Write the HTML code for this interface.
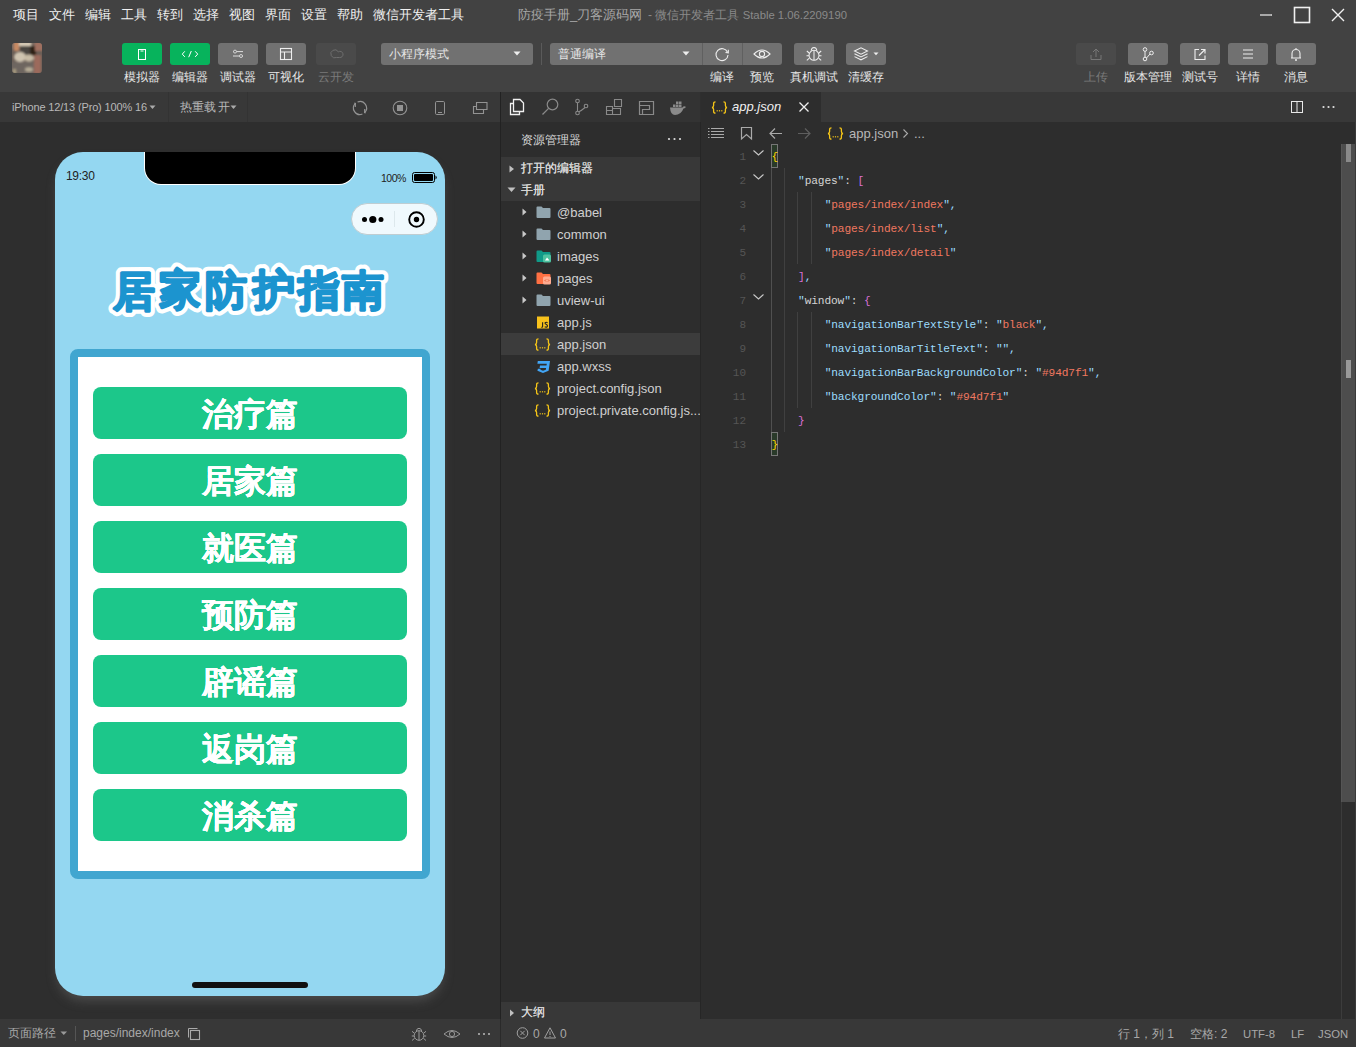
<!DOCTYPE html>
<html><head><meta charset="utf-8">
<style>
*{margin:0;padding:0;box-sizing:border-box}
html,body{width:1356px;height:1047px;overflow:hidden;background:#2e2e2e;font-family:"Liberation Sans",sans-serif;color:#ddd}
.a{position:absolute}
#top{left:0;top:0;width:1356px;height:92px;background:#424242}
.menu{top:7px;font-size:13px;color:#f0f0f0;line-height:16px;white-space:nowrap}
.tb{top:43px;width:40px;height:22px;border-radius:3px;background:#717171}
.tbl{top:70px;font-size:12px;color:#e6e6e6;line-height:14px;text-align:center;white-space:nowrap}
#simhdr{left:0;top:92px;width:500px;height:30px;background:#383838}
#sim{left:0;top:122px;width:500px;height:897px;background:#2e2e2e}
#vsep{left:500px;top:92px;width:1px;height:927px;background:#222}
#exp{left:501px;top:92px;width:199px;height:927px;background:#2d2d2d}
#edit{left:701px;top:92px;width:655px;height:927px;background:#2d2d2d}
#status{left:0;top:1019px;width:1356px;height:28px;background:#383838}
.btn{left:38px;width:314px;height:52px;border-radius:8px;background:#1cc78a;color:#fff;font-size:32px;line-height:54px;font-weight:bold;text-align:center;text-shadow:0.45px 0 0 #fff,-0.45px 0 0 #fff,0 0.4px 0 #fff}
.fn{left:56px;font-size:13px;line-height:15px;color:#d0d0d0;white-space:nowrap}
.ji{left:33px;font-size:11px;line-height:13px;color:#f5c518;font-family:"Liberation Mono",monospace;letter-spacing:-1.5px}
.ln{left:0;width:45px;text-align:right;font-family:"Liberation Mono",monospace;font-size:11px;line-height:24px;color:#555;margin-top:1px}
.code{margin-top:1px;font-family:"Liberation Mono",monospace;font-size:11.2px;line-height:24px;white-space:pre;color:#d4d4d4;letter-spacing:-0.13px}
.st{top:8px;font-size:12px;line-height:14px;color:#a8a8a8;white-space:nowrap}
</style></head><body>
<!-- TOP BAR -->
<div id="top" class="a">
<div class="a menu" style="left:13px">项目</div>
<div class="a menu" style="left:49px">文件</div>
<div class="a menu" style="left:85px">编辑</div>
<div class="a menu" style="left:121px">工具</div>
<div class="a menu" style="left:157px">转到</div>
<div class="a menu" style="left:193px">选择</div>
<div class="a menu" style="left:229px">视图</div>
<div class="a menu" style="left:265px">界面</div>
<div class="a menu" style="left:301px">设置</div>
<div class="a menu" style="left:337px">帮助</div>
<div class="a menu" style="left:373px">微信开发者工具</div>
<div class="a menu" style="left:518px;color:#a8a8a8">防疫手册_刀客源码网</div><div class="a" style="left:648px;top:8px;font-size:12px;line-height:14px;color:#8a8a8a;white-space:nowrap">- 微信开发者工具 <span style="font-size:11.3px">Stable 1.06.2209190</span></div>
<!-- window controls -->
<svg class="a" style="left:1250px;top:0;width:106px;height:30px" viewBox="0 0 106 30">
<line x1="10" y1="15" x2="22" y2="15" stroke="#e0e0e0" stroke-width="1.3"/>
<rect x="44.5" y="7.5" width="15" height="15" fill="none" stroke="#f0f0f0" stroke-width="1.6"/>
<path d="M82 9 L94 21 M94 9 L82 21" stroke="#f0f0f0" stroke-width="1.4"/>
</svg>
<!-- avatar -->
<svg class="a" style="left:12px;top:43px" width="30" height="30" viewBox="0 0 30 30">
<defs><filter id="bl" x="-20%" y="-20%" width="140%" height="140%"><feGaussianBlur stdDeviation="1.1"/></filter><clipPath id="avc"><rect x="0" y="0" width="30" height="30" rx="3"/></clipPath></defs>
<g clip-path="url(#avc)">
<rect x="0" y="0" width="30" height="30" fill="#6a5e56"/>
<g filter="url(#bl)">
<rect x="-2" y="-2" width="34" height="8" fill="#7a6a60"/>
<rect x="2" y="-1" width="5" height="9" fill="#c88a64"/>
<rect x="7" y="-1" width="12" height="4" fill="#d8ccb8"/>
<rect x="8" y="3" width="11" height="9" fill="#4a4440"/>
<rect x="18" y="3" width="6" height="10" fill="#2e2018"/>
<rect x="23" y="-1" width="8" height="9" fill="#a07060"/>
<ellipse cx="8" cy="14" rx="6" ry="5" fill="#cfc4b0"/>
<ellipse cx="17" cy="15" rx="5" ry="3.5" fill="#c8bca6"/>
<rect x="-1" y="19" width="24" height="12" fill="#6e6660"/>
<rect x="22" y="12" width="7" height="19" fill="#9c6a5c"/>
<ellipse cx="17" cy="26.5" rx="4" ry="2.2" fill="#b8ae98"/>
<rect x="1" y="26" width="3" height="5" fill="#a89c80"/>
</g></g></svg>
<!-- left buttons -->
<div class="a tb" style="left:122px;background:#07b35c"><svg width="40" height="22"><rect x="16.5" y="6.5" width="7" height="10" fill="none" stroke="#fff" stroke-width="1"/><line x1="18.5" y1="8" x2="21.5" y2="8" stroke="#fff" stroke-width="1"/></svg></div>
<div class="a tb" style="left:170px;background:#07b35c"><svg width="40" height="22"><path d="M14.8 8.3 L12.3 11.1 L14.8 13.9 M25.2 8.3 L27.7 11.1 L25.2 13.9 M21.3 8 L18.7 14.2" fill="none" stroke="#fff" stroke-width="1"/></svg></div>
<div class="a tb" style="left:218px"><svg width="40" height="22"><path d="M15 8.6 H25 M15 13 H25" stroke="#ddd" stroke-width="1"/><circle cx="17" cy="8.6" r="1.5" fill="#717171" stroke="#ddd" stroke-width="0.9"/><circle cx="23" cy="13" r="1.5" fill="#717171" stroke="#ddd" stroke-width="0.9"/></svg></div>
<div class="a tb" style="left:266px"><svg width="40" height="22"><rect x="14.5" y="5.5" width="11" height="11" fill="none" stroke="#eee" stroke-width="1.1"/><path d="M14.5 9 H25.5 M18.5 9 V16.5" stroke="#eee" stroke-width="1.1"/></svg></div>
<div class="a tb" style="left:316px;background:#4a4a4a"><svg width="40" height="22"><path d="M20.5 14.5 A4 4 0 1 1 22.3 8.8 A3.1 3.1 0 1 1 23.5 14.5Z" fill="none" stroke="#6e6e6e" stroke-width="1"/></svg></div>
<div class="a tbl" style="left:122px;width:40px">模拟器</div>
<div class="a tbl" style="left:170px;width:40px">编辑器</div>
<div class="a tbl" style="left:218px;width:40px">调试器</div>
<div class="a tbl" style="left:266px;width:40px">可视化</div>
<div class="a tbl" style="left:316px;width:40px;color:#7a7a7a">云开发</div>
<!-- dropdowns -->
<div class="a" style="left:381px;top:43px;width:152px;height:22px;border-radius:3px;background:#717171"></div>
<div class="a" style="left:389px;top:47px;font-size:12px;line-height:14px;color:#e6e6e6">小程序模式</div>
<svg class="a" style="left:513px;top:51px" width="8" height="5"><path d="M0.5 0.5 L7.5 0.5 L4 4.5Z" fill="#eee"/></svg>
<div class="a" style="left:541px;top:43px;width:1px;height:22px;background:#5a5a5a"></div>
<div class="a" style="left:550px;top:43px;width:232px;height:22px;border-radius:3px;background:#717171"></div>
<div class="a" style="left:702px;top:43px;width:1px;height:22px;background:#606060"></div>
<div class="a" style="left:742px;top:43px;width:1px;height:22px;background:#606060"></div>
<div class="a" style="left:558px;top:47px;font-size:12px;line-height:14px;color:#e6e6e6">普通编译</div>
<svg class="a" style="left:682px;top:51px" width="8" height="5"><path d="M0.5 0.5 L7.5 0.5 L4 4.5Z" fill="#eee"/></svg>
<svg class="a" style="left:702px;top:43px" width="40" height="22"><path d="M25.5 9.2 A6 6 0 1 0 26 12" fill="none" stroke="#eee" stroke-width="1.1"/><path d="M23.5 9.5 L26.3 9.8 L26.3 6.8" fill="none" stroke="#eee" stroke-width="1.1"/></svg>
<svg class="a" style="left:742px;top:43px" width="40" height="22"><path d="M12 11 Q20 3 28 11 Q20 19 12 11Z" fill="none" stroke="#eee" stroke-width="1.1"/><circle cx="20" cy="11" r="2.6" fill="none" stroke="#eee" stroke-width="1.1"/></svg>
<div class="a tb" style="left:794px"><svg width="40" height="22"><circle cx="20" cy="12.3" r="5" fill="none" stroke="#eee" stroke-width="1.05"/><path d="M17.2 7.8 Q17.4 4.8 20 4.6 Q22.6 4.8 22.8 7.8 M20 7.3 V17.3 M15.2 10 L12.8 8 M15 12.8 H12.5 M15.4 15.2 L12.8 17.4 M24.8 10 L27.2 8 M25 12.8 H27.5 M24.6 15.2 L27.2 17.4" fill="none" stroke="#eee" stroke-width="1.05"/></svg></div>
<div class="a tb" style="left:846px"><svg width="40" height="22"><path d="M8.5 8 L15 4.8 L21.5 8 L15 11.2Z M8.5 10.8 L15 14 L21.5 10.8 M8.5 13.6 L15 16.8 L21.5 13.6" fill="none" stroke="#eee" stroke-width="1.05"/><path d="M27.5 9.5 L32.5 9.5 L30 12.3Z" fill="#eee"/></svg></div>
<div class="a tbl" style="left:702px;width:40px">编译</div>
<div class="a tbl" style="left:742px;width:40px">预览</div>
<div class="a tbl" style="left:790px;width:48px">真机调试</div>
<div class="a tbl" style="left:842px;width:48px">清缓存</div>
<!-- right buttons -->
<div class="a tb" style="left:1076px;background:#4a4a4a"><svg width="40" height="22"><path d="M15 12 V16.5 H25 V12 M20 14 V6 M17 9 L20 6 L23 9" fill="none" stroke="#777" stroke-width="1"/></svg></div>
<div class="a tb" style="left:1128px"><svg width="40" height="22"><circle cx="17" cy="6.5" r="1.8" fill="none" stroke="#eee"/><circle cx="17" cy="16" r="1.8" fill="none" stroke="#eee"/><circle cx="23.5" cy="10" r="1.8" fill="none" stroke="#eee"/><path d="M17 8.3 V14.2 M22 11 L18.5 15" fill="none" stroke="#eee"/></svg></div>
<div class="a tb" style="left:1180px"><svg width="40" height="22"><path d="M19 6.5 H15 V16.5 H25 V12.5 M21 6.5 H25 V10.5 M25 6.5 L19 12.5" fill="none" stroke="#eee" stroke-width="1.1"/></svg></div>
<div class="a tb" style="left:1228px"><svg width="40" height="22"><path d="M15 7 H25 M15 11 H25 M15 15 H25" stroke="#eee" stroke-width="1.1"/></svg></div>
<div class="a tb" style="left:1276px"><svg width="40" height="22"><path d="M16 15 V10.5 A4 4 0 0 1 24 10.5 V15 H16 M15 15 H25 M20 5 V6.5" fill="none" stroke="#eee" stroke-width="1.1"/><circle cx="20" cy="17" r="1" fill="#eee"/></svg></div>
<div class="a tbl" style="left:1076px;width:40px;color:#7a7a7a">上传</div>
<div class="a tbl" style="left:1120px;width:56px">版本管理</div>
<div class="a tbl" style="left:1176px;width:48px">测试号</div>
<div class="a tbl" style="left:1228px;width:40px">详情</div>
<div class="a tbl" style="left:1276px;width:40px">消息</div>
</div>

<!-- SIM HEADER -->
<div id="simhdr" class="a">
<div class="a" style="left:12px;top:8px;font-size:11px;line-height:14px;color:#b8b8b8;white-space:nowrap;letter-spacing:-0.15px">iPhone 12/13 (Pro) 100% 16</div>
<svg class="a" style="left:149px;top:13px" width="7" height="5"><path d="M0.5 0.5 L6.5 0.5 L3.5 4Z" fill="#aaa"/></svg>
<div class="a" style="left:168px;top:0;width:1px;height:30px;background:#333"></div>
<div class="a" style="left:180px;top:8px;font-size:11.5px;line-height:14px;color:#b8b8b8;white-space:nowrap;letter-spacing:-0.2px">热重载 开</div>
<svg class="a" style="left:230px;top:13px" width="7" height="5"><path d="M0.5 0.5 L6.5 0.5 L3.5 4Z" fill="#aaa"/></svg>
<div class="a" style="left:247px;top:0;width:1px;height:30px;background:#333"></div>
<svg class="a" style="left:340px;top:0" width="160" height="30">
<path d="M17.57 9.97 A6.5 6.5 0 0 1 24.60 20.60 M22.43 22.03 A6.5 6.5 0 0 1 15.40 11.40" fill="none" stroke="#939393" stroke-width="1.2"/>
<path d="M24.74 17.06 L24.60 20.60 L25.66 20.81 M15.26 14.94 L15.40 11.40 L14.34 11.19" fill="none" stroke="#939393" stroke-width="1.2"/>
<circle cx="60" cy="16" r="6.8" fill="none" stroke="#939393" stroke-width="1.1"/>
<rect x="57" y="13" width="6" height="6" fill="#939393"/>
<rect x="95.5" y="9.5" width="9" height="13" rx="1.2" fill="none" stroke="#939393" stroke-width="1"/>
<line x1="98" y1="20.5" x2="102" y2="20.5" stroke="#939393" stroke-width="1"/>
<path d="M136.5 10.5 H147 V17.5 H136.5Z M136.5 14.5 H133.5 V21.5 H143.5 V17.5" fill="none" stroke="#939393" stroke-width="1.1"/>
</svg>
</div>
<!-- SIM -->
<div id="sim" class="a">
<div id="phone" class="a" style="left:55px;top:30px;width:390px;height:844px;border-radius:28px;background:#94d7f1;overflow:hidden;box-shadow:0 7px 12px -3px rgba(130,130,130,.4)">
  <!-- notch -->
  <div class="a" style="left:89px;top:-1px;width:212px;height:34px;border-radius:0 0 17px 17px;background:#fff"></div>
  <div class="a" style="left:90px;top:-1px;width:210px;height:33px;border-radius:0 0 16px 16px;background:#000"></div>
  <div class="a" style="left:11px;top:17px;font-size:12px;line-height:14px;color:#222;letter-spacing:-0.3px">19:30</div>
  <div class="a" style="left:326px;top:20px;font-size:10.5px;line-height:12px;color:#222;letter-spacing:-0.5px">100%</div>
  <svg class="a" style="left:357px;top:20px" width="28" height="12"><rect x="0.5" y="0.5" width="22" height="10" rx="2" fill="none" stroke="#000" stroke-width="1"/><rect x="2" y="2" width="19" height="7" rx="1" fill="#000"/><path d="M23.5 3.5 Q26 5.5 23.5 7.5Z" fill="#000"/></svg>
  <!-- capsule -->
  <div class="a" style="left:296px;top:51px;width:87px;height:32px;border-radius:16px;background:#f0f9fd;border:1px solid #bfcdd2"></div>
  <div class="a" style="left:339px;top:59px;width:1px;height:16px;background:#dde8ec"></div>
  <svg class="a" style="left:296px;top:51px" width="87" height="32">
    <circle cx="13.5" cy="16.5" r="2.5" fill="#000"/><circle cx="21.8" cy="16.5" r="3.6" fill="#000"/><circle cx="30" cy="16.5" r="2.5" fill="#000"/>
    <circle cx="65.5" cy="16.5" r="7.3" fill="none" stroke="#000" stroke-width="1.9"/><circle cx="65.5" cy="16.5" r="2.7" fill="#000"/>
  </svg>
  <!-- logo -->
  <svg class="a" style="left:0;top:100px" width="390" height="110" viewBox="0 0 390 110"><text x="78.7" y="54" text-anchor="middle" font-family="Liberation Sans" font-size="42" font-weight="bold" fill="#fff" stroke="#fff" stroke-width="10.5" stroke-linejoin="round">居</text><text x="125.2" y="52" text-anchor="middle" font-family="Liberation Sans" font-size="42" font-weight="bold" fill="#fff" stroke="#fff" stroke-width="10.5" stroke-linejoin="round">家</text><text x="170.5" y="53" text-anchor="middle" font-family="Liberation Sans" font-size="42" font-weight="bold" fill="#fff" stroke="#fff" stroke-width="10.5" stroke-linejoin="round">防</text><text x="218.6" y="52" text-anchor="middle" font-family="Liberation Sans" font-size="42" font-weight="bold" fill="#fff" stroke="#fff" stroke-width="10.5" stroke-linejoin="round">护</text><text x="264.0" y="53" text-anchor="middle" font-family="Liberation Sans" font-size="42" font-weight="bold" fill="#fff" stroke="#fff" stroke-width="10.5" stroke-linejoin="round">指</text><text x="308.0" y="53" text-anchor="middle" font-family="Liberation Sans" font-size="42" font-weight="bold" fill="#fff" stroke="#fff" stroke-width="10.5" stroke-linejoin="round">南</text><text x="78.7" y="54" text-anchor="middle" font-family="Liberation Sans" font-size="42" font-weight="bold" fill="#1c94cf" stroke="#1c94cf" stroke-width="2.2" stroke-linejoin="round">居</text><text x="125.2" y="52" text-anchor="middle" font-family="Liberation Sans" font-size="42" font-weight="bold" fill="#1c94cf" stroke="#1c94cf" stroke-width="2.2" stroke-linejoin="round">家</text><text x="170.5" y="53" text-anchor="middle" font-family="Liberation Sans" font-size="42" font-weight="bold" fill="#1c94cf" stroke="#1c94cf" stroke-width="2.2" stroke-linejoin="round">防</text><text x="218.6" y="52" text-anchor="middle" font-family="Liberation Sans" font-size="42" font-weight="bold" fill="#1c94cf" stroke="#1c94cf" stroke-width="2.2" stroke-linejoin="round">护</text><text x="264.0" y="53" text-anchor="middle" font-family="Liberation Sans" font-size="42" font-weight="bold" fill="#1c94cf" stroke="#1c94cf" stroke-width="2.2" stroke-linejoin="round">指</text><text x="308.0" y="53" text-anchor="middle" font-family="Liberation Sans" font-size="42" font-weight="bold" fill="#1c94cf" stroke="#1c94cf" stroke-width="2.2" stroke-linejoin="round">南</text></svg>
  <!-- card -->
  <div class="a" style="left:15px;top:197px;width:360px;height:530px;border:8px solid #41a6d0;border-radius:8px;background:#fff"></div>
  <div class="a btn" style="top:235px">治疗篇</div>
  <div class="a btn" style="top:302px">居家篇</div>
  <div class="a btn" style="top:369px">就医篇</div>
  <div class="a btn" style="top:436px">预防篇</div>
  <div class="a btn" style="top:503px">辟谣篇</div>
  <div class="a btn" style="top:570px">返岗篇</div>
  <div class="a btn" style="top:637px">消杀篇</div>
  <!-- home indicator -->
  <div class="a" style="left:137px;top:830px;width:116px;height:6px;border-radius:3px;background:#111"></div>
</div>
</div>

<div id="vsep" class="a"></div>
<!-- EXPLORER -->
<div id="exp" class="a">
<div class="a" style="left:0;top:0;width:199px;height:30px;background:#333"></div>
<svg class="a" style="left:0;top:0" width="199" height="30">
<!-- files -->
<path d="M12.5 11.5 H9.5 V22.5 H18.5 V19.5" fill="none" stroke="#f0f0f0" stroke-width="1.3"/>
<path d="M12.5 7.5 H19 L22.5 11 V19.5 H12.5Z" fill="none" stroke="#f0f0f0" stroke-width="1.3"/>
<!-- search -->
<circle cx="51.5" cy="12.5" r="5.3" fill="none" stroke="#8a8a8a" stroke-width="1.2"/>
<line x1="47.6" y1="16.4" x2="41.5" y2="22.5" stroke="#8a8a8a" stroke-width="1.3"/>
<!-- git -->
<circle cx="76.5" cy="9" r="1.8" fill="none" stroke="#8a8a8a" stroke-width="1.1"/>
<circle cx="76.5" cy="21" r="1.8" fill="none" stroke="#8a8a8a" stroke-width="1.1"/>
<circle cx="85" cy="14" r="1.8" fill="none" stroke="#8a8a8a" stroke-width="1.1"/>
<path d="M76.5 10.8 V19.2 M84 15.5 Q80 19 77.8 19.8" fill="none" stroke="#8a8a8a" stroke-width="1.1"/>
<!-- ext -->
<path d="M105.5 14.5 H111.5 V22.5 H105.5Z M111.5 16.5 H119.5 V22.5 H111.5 M105.5 18.5 H111.5 M113.5 7.5 H120.5 V14.5 H113.5Z" fill="none" stroke="#8a8a8a" stroke-width="1.1"/>
<!-- layout -->
<path d="M138.5 9.5 H152.5 V22.5 H138.5Z M138.5 13.5 H148.5 V17.5 H141.5 V22.5" fill="none" stroke="#8a8a8a" stroke-width="1.2"/>
<!-- docker -->
<path d="M169 15.5 H181.5 Q183 13.5 185 15 Q183.5 16.5 182.5 16.5 Q180 23 174 23 Q169.5 23 169 15.5Z" fill="#8a8a8a"/>
<rect x="172" y="12.5" width="2.5" height="2.5" fill="#8a8a8a"/><rect x="175" y="12.5" width="2.5" height="2.5" fill="#8a8a8a"/><rect x="178" y="12.5" width="2.5" height="2.5" fill="#8a8a8a"/><rect x="175" y="9.5" width="2.5" height="2.5" fill="#8a8a8a"/><rect x="178" y="9.5" width="2.5" height="2.5" fill="#8a8a8a"/>
</svg>
<div class="a" style="left:20px;top:41px;font-size:12px;line-height:14px;color:#d8d8d8">资源管理器</div>
<svg class="a" style="left:166px;top:45px" width="16" height="4"><circle cx="2" cy="2" r="1.1" fill="#ddd"/><circle cx="7.5" cy="2" r="1.1" fill="#ddd"/><circle cx="13" cy="2" r="1.1" fill="#ddd"/></svg>
<div class="a" style="left:0;top:65px;width:199px;height:44px;background:#383838"></div>
<svg class="a" style="left:7px;top:72px" width="10" height="10"><path d="M1.5 1.5 L6 5 L1.5 8.5Z" fill="#c0c0c0"/></svg>
<div class="a" style="left:20px;top:69px;font-size:11.5px;line-height:14px;color:#d8d8d8;text-shadow:0.35px 0 0 #d8d8d8">打开的编辑器</div>
<svg class="a" style="left:6px;top:94px" width="10" height="8"><path d="M0.5 1.5 H8.5 L4.5 6Z" fill="#c0c0c0"/></svg>
<div class="a" style="left:20px;top:91px;font-size:11.5px;line-height:14px;color:#d8d8d8;text-shadow:0.35px 0 0 #d8d8d8">手册</div>
<!-- selected row -->
<div class="a" style="left:0;top:241px;width:199px;height:22px;background:#3c3c3c"></div>
<!-- arrows -->
<svg class="a" style="left:20px;top:109px" width="10" height="110">
<path d="M1.5 7.5 L5.5 11 L1.5 14.5Z M1.5 29.5 L5.5 33 L1.5 36.5Z M1.5 51.5 L5.5 55 L1.5 58.5Z M1.5 73.5 L5.5 77 L1.5 80.5Z M1.5 95.5 L5.5 99 L1.5 102.5Z" fill="#c8c8c8"/>
</svg>
<!-- icons -->
<svg class="a" style="left:34px;top:110px" width="20" height="220">
<path d="M1.5 5.5 Q1.5 4.5 2.5 4.5 H6.5 L8 6 H14.5 Q15.5 6 15.5 7 V15 Q15.5 16 14.5 16 H2.5 Q1.5 16 1.5 15Z" fill="#90a4ae"/>
<path d="M1.5 27.5 Q1.5 26.5 2.5 26.5 H6.5 L8 28 H14.5 Q15.5 28 15.5 29 V37 Q15.5 38 14.5 38 H2.5 Q1.5 38 1.5 37Z" fill="#90a4ae"/>
<path d="M1.5 49.5 Q1.5 48.5 2.5 48.5 H6.5 L8 50 H14.5 Q15.5 50 15.5 51 V59 Q15.5 60 14.5 60 H2.5 Q1.5 60 1.5 59Z" fill="#109a88"/>
<rect x="8" y="52.5" width="8" height="8" rx="1.5" fill="#4fc3a1"/><path d="M10 58.5 L12 55.5 L14.5 58.5Z" fill="#fff"/>
<path d="M1.5 71.5 Q1.5 70.5 2.5 70.5 H6.5 L8 72 H14.5 Q15.5 72 15.5 73 V81 Q15.5 82 14.5 82 H2.5 Q1.5 82 1.5 81Z" fill="#ff7043"/>
<rect x="8" y="74.5" width="8" height="8" rx="1.5" fill="#ffab91"/><path d="M10 78.5 L11 77.5 M10 78.5 L11 79.5 M14 78.5 L13 77.5 M14 78.5 L13 79.5" stroke="#d84315" stroke-width=".8"/>
<path d="M1.5 93.5 Q1.5 92.5 2.5 92.5 H6.5 L8 94 H14.5 Q15.5 94 15.5 95 V103 Q15.5 104 14.5 104 H2.5 Q1.5 104 1.5 103Z" fill="#90a4ae"/>
<!-- app.js -->
<rect x="2" y="114.5" width="12" height="12" fill="#f8c21c"/><path d="M7.6 120.3 V124.4 Q7.6 125.4 6.3 125.3 M12.6 120.7 Q11.2 119.9 10.1 120.7 Q9.7 122 11.4 122.6 Q12.9 123.3 12.2 124.7 Q11.2 125.5 9.7 124.8" fill="none" stroke="#222" stroke-width="1.1"/>
<!-- json icons -->

<path d="M1 132 Q1 137" fill="none"/>
<!-- wxss -->
<path d="M2.5 250.5 H14 L12.5 261 L7.5 263 L3 261" fill="none"/>
</svg>
<svg class="a" style="left:33px;top:246px" width="17" height="13"><path d="M4.5 0.8 Q2.6 0.8 2.6 2.6 V4.6 Q2.6 6.3 1 6.5 Q2.6 6.7 2.6 8.4 V10.4 Q2.6 12.2 4.5 12.2 M12.5 0.8 Q14.4 0.8 14.4 2.6 V4.6 Q14.4 6.3 16 6.5 Q14.4 6.7 14.4 8.4 V10.4 Q14.4 12.2 12.5 12.2" fill="none" stroke="#f5c518" stroke-width="1.3"/><rect x="5.6" y="9.2" width="1.2" height="1.2" fill="#f5c518"/><rect x="7.9" y="9.2" width="1.2" height="1.2" fill="#f5c518"/><rect x="10.2" y="9.2" width="1.2" height="1.2" fill="#f5c518"/></svg>
<svg class="a" style="left:33px;top:290px" width="17" height="13"><path d="M4.5 0.8 Q2.6 0.8 2.6 2.6 V4.6 Q2.6 6.3 1 6.5 Q2.6 6.7 2.6 8.4 V10.4 Q2.6 12.2 4.5 12.2 M12.5 0.8 Q14.4 0.8 14.4 2.6 V4.6 Q14.4 6.3 16 6.5 Q14.4 6.7 14.4 8.4 V10.4 Q14.4 12.2 12.5 12.2" fill="none" stroke="#f5c518" stroke-width="1.3"/><rect x="5.6" y="9.2" width="1.2" height="1.2" fill="#f5c518"/><rect x="7.9" y="9.2" width="1.2" height="1.2" fill="#f5c518"/><rect x="10.2" y="9.2" width="1.2" height="1.2" fill="#f5c518"/></svg>
<svg class="a" style="left:33px;top:312px" width="17" height="13"><path d="M4.5 0.8 Q2.6 0.8 2.6 2.6 V4.6 Q2.6 6.3 1 6.5 Q2.6 6.7 2.6 8.4 V10.4 Q2.6 12.2 4.5 12.2 M12.5 0.8 Q14.4 0.8 14.4 2.6 V4.6 Q14.4 6.3 16 6.5 Q14.4 6.7 14.4 8.4 V10.4 Q14.4 12.2 12.5 12.2" fill="none" stroke="#f5c518" stroke-width="1.3"/><rect x="5.6" y="9.2" width="1.2" height="1.2" fill="#f5c518"/><rect x="7.9" y="9.2" width="1.2" height="1.2" fill="#f5c518"/><rect x="10.2" y="9.2" width="1.2" height="1.2" fill="#f5c518"/></svg>
<svg class="a" style="left:34px;top:267px" width="16" height="16"><path d="M2.8 2 H15 L13.6 11.8 L8 14 L2.4 11.8 L2.9 9.8 H5.6 L5.4 10.8 L8 11.7 L10.8 10.8 L11.1 9.1 H4.6 L5 6.6 H11.5 L11.8 4.7 H2.4Z" fill="#42a5f5"/></svg>
<div class="a fn" style="top:113px">@babel</div>
<div class="a fn" style="top:135px">common</div>
<div class="a fn" style="top:157px">images</div>
<div class="a fn" style="top:179px">pages</div>
<div class="a fn" style="top:201px">uview-ui</div>
<div class="a fn" style="top:223px">app.js</div>
<div class="a fn" style="top:245px">app.json</div>
<div class="a fn" style="top:267px">app.wxss</div>
<div class="a fn" style="top:289px">project.config.json</div>
<div class="a fn" style="top:311px">project.private.config.js...</div>
<div class="a" style="left:199px;top:30px;width:1px;height:897px;background:#262626"></div>
<!-- outline section -->
<div class="a" style="left:0;top:910px;width:199px;height:17px;background:#383838"></div>
<svg class="a" style="left:8px;top:917px" width="8" height="8"><path d="M1 0.5 L5 4 L1 7.5Z" fill="#c0c0c0"/></svg>
<div class="a" style="left:20px;top:914px;font-size:11.5px;line-height:13px;color:#d8d8d8;text-shadow:0.35px 0 0 #d8d8d8">大纲</div>
</div>

<!-- EDITOR -->
<div id="edit" class="a">
<div class="a" style="left:0;top:0;width:655px;height:30px;background:#383838"></div>
<div class="a" style="left:0;top:0;width:120px;height:30px;background:#2d2d2d"></div>
<svg class="a" style="left:10px;top:9px" width="17" height="13"><path d="M4.5 0.8 Q2.6 0.8 2.6 2.6 V4.6 Q2.6 6.3 1 6.5 Q2.6 6.7 2.6 8.4 V10.4 Q2.6 12.2 4.5 12.2 M12.5 0.8 Q14.4 0.8 14.4 2.6 V4.6 Q14.4 6.3 16 6.5 Q14.4 6.7 14.4 8.4 V10.4 Q14.4 12.2 12.5 12.2" fill="none" stroke="#f5c518" stroke-width="1.3"/><rect x="5.6" y="9.2" width="1.2" height="1.2" fill="#f5c518"/><rect x="7.9" y="9.2" width="1.2" height="1.2" fill="#f5c518"/><rect x="10.2" y="9.2" width="1.2" height="1.2" fill="#f5c518"/></svg>
<div class="a" style="left:31px;top:7px;font-size:13px;line-height:16px;font-style:italic;color:#f0f0f0">app.json</div>
<svg class="a" style="left:97px;top:9px" width="12" height="12"><path d="M1.5 1.5 L10.5 10.5 M10.5 1.5 L1.5 10.5" stroke="#f0f0f0" stroke-width="1.3"/></svg>
<svg class="a" style="left:588px;top:7px" width="16" height="16"><rect x="2.5" y="2.5" width="11" height="11" fill="none" stroke="#e8e8e8" stroke-width="1"/><line x1="8" y1="2.5" x2="8" y2="13.5" stroke="#e8e8e8" stroke-width="1"/></svg>
<svg class="a" style="left:620px;top:13px" width="16" height="4"><circle cx="2.5" cy="2" r="1.1" fill="#e0e0e0"/><circle cx="7.5" cy="2" r="1.1" fill="#e0e0e0"/><circle cx="12.5" cy="2" r="1.1" fill="#e0e0e0"/></svg>
<svg class="a" style="left:0;top:30px" width="240" height="24"><path d="M10 6.5 H23 M10 9.5 H23 M10 12.5 H23 M10 15.5 H23" stroke="#aaa" stroke-width="1"/><path d="M7 6.5 H8.5 M7 9.5 H8.5 M7 12.5 H8.5 M7 15.5 H8.5" stroke="#aaa" stroke-width="1"/><path d="M40.5 5.5 H50.5 V17 L45.5 12.5 L40.5 17Z" fill="none" stroke="#aaa" stroke-width="1.2"/><path d="M81 11.5 H69 M74 6.5 L69 11.5 L74 16.5" fill="none" stroke="#aaa" stroke-width="1.2"/><path d="M97 11.5 H109 M104 6.5 L109 11.5 L104 16.5" fill="none" stroke="#5e5e5e" stroke-width="1.2"/><path d="M202.5 7.5 L206.5 11.5 L202.5 15.5" fill="none" stroke="#aaa" stroke-width="1.1"/></svg>
<svg class="a" style="left:126px;top:35px" width="17" height="13"><path d="M4.5 0.8 Q2.6 0.8 2.6 2.6 V4.6 Q2.6 6.3 1 6.5 Q2.6 6.7 2.6 8.4 V10.4 Q2.6 12.2 4.5 12.2 M12.5 0.8 Q14.4 0.8 14.4 2.6 V4.6 Q14.4 6.3 16 6.5 Q14.4 6.7 14.4 8.4 V10.4 Q14.4 12.2 12.5 12.2" fill="none" stroke="#f5c518" stroke-width="1.3"/><rect x="5.6" y="9.2" width="1.2" height="1.2" fill="#f5c518"/><rect x="7.9" y="9.2" width="1.2" height="1.2" fill="#f5c518"/><rect x="10.2" y="9.2" width="1.2" height="1.2" fill="#f5c518"/></svg>
<div class="a" style="left:148px;top:34px;font-size:13px;line-height:15px;color:#b8b8b8">app.json</div>
<div class="a" style="left:213px;top:34px;font-size:13px;line-height:15px;color:#b8b8b8">...</div>
<div class="a ln" style="top:52px">1</div>
<div class="a code" style="top:52px;left:70.5px"><span style="color:#ffd700">{</span></div>
<div class="a ln" style="top:76px">2</div>
<div class="a code" style="top:76px;left:97.1px"><span style="color:#9cdcfe">"</span><span style="color:#d4d4d4">pages</span><span style="color:#9cdcfe">"</span><span style="color:#d4d4d4">: </span><span style="color:#da70d6">[</span></div>
<div class="a ln" style="top:100px">3</div>
<div class="a code" style="top:100px;left:123.7px"><span style="color:#9cdcfe">"</span><span style="color:#f07860">pages/index/index</span><span style="color:#9cdcfe">"</span><span style="color:#9cdcfe">,</span></div>
<div class="a ln" style="top:124px">4</div>
<div class="a code" style="top:124px;left:123.7px"><span style="color:#9cdcfe">"</span><span style="color:#f07860">pages/index/list</span><span style="color:#9cdcfe">"</span><span style="color:#9cdcfe">,</span></div>
<div class="a ln" style="top:148px">5</div>
<div class="a code" style="top:148px;left:123.7px"><span style="color:#9cdcfe">"</span><span style="color:#f07860">pages/index/detail</span><span style="color:#9cdcfe">"</span></div>
<div class="a ln" style="top:172px">6</div>
<div class="a code" style="top:172px;left:97.1px"><span style="color:#da70d6">]</span><span style="color:#9cdcfe">,</span></div>
<div class="a ln" style="top:196px">7</div>
<div class="a code" style="top:196px;left:97.1px"><span style="color:#9cdcfe">"</span><span style="color:#d4d4d4">window</span><span style="color:#9cdcfe">"</span><span style="color:#d4d4d4">: </span><span style="color:#da70d6">{</span></div>
<div class="a ln" style="top:220px">8</div>
<div class="a code" style="top:220px;left:123.7px"><span style="color:#9cdcfe">"</span><span style="color:#9cdcfe">navigationBarTextStyle</span><span style="color:#9cdcfe">"</span><span style="color:#d4d4d4">: </span><span style="color:#9cdcfe">"</span><span style="color:#f07860">black</span><span style="color:#9cdcfe">"</span><span style="color:#9cdcfe">,</span></div>
<div class="a ln" style="top:244px">9</div>
<div class="a code" style="top:244px;left:123.7px"><span style="color:#9cdcfe">"</span><span style="color:#9cdcfe">navigationBarTitleText</span><span style="color:#9cdcfe">"</span><span style="color:#d4d4d4">: </span><span style="color:#9cdcfe">""</span><span style="color:#9cdcfe">,</span></div>
<div class="a ln" style="top:268px">10</div>
<div class="a code" style="top:268px;left:123.7px"><span style="color:#9cdcfe">"</span><span style="color:#9cdcfe">navigationBarBackgroundColor</span><span style="color:#9cdcfe">"</span><span style="color:#d4d4d4">: </span><span style="color:#9cdcfe">"</span><span style="color:#f07860">#94d7f1</span><span style="color:#9cdcfe">"</span><span style="color:#9cdcfe">,</span></div>
<div class="a ln" style="top:292px">11</div>
<div class="a code" style="top:292px;left:123.7px"><span style="color:#9cdcfe">"</span><span style="color:#9cdcfe">backgroundColor</span><span style="color:#9cdcfe">"</span><span style="color:#d4d4d4">: </span><span style="color:#9cdcfe">"</span><span style="color:#f07860">#94d7f1</span><span style="color:#9cdcfe">"</span></div>
<div class="a ln" style="top:316px">12</div>
<div class="a code" style="top:316px;left:97.1px"><span style="color:#da70d6">}</span></div>
<div class="a ln" style="top:340px">13</div>
<div class="a code" style="top:340px;left:70.5px"><span style="color:#ffd700">}</span></div>
<svg class="a" style="left:51px;top:57px" width="13" height="8"><path d="M1.5 1.5 L6.5 6 L11.5 1.5" fill="none" stroke="#c8c8c8" stroke-width="1.1"/></svg>
<svg class="a" style="left:51px;top:81px" width="13" height="8"><path d="M1.5 1.5 L6.5 6 L11.5 1.5" fill="none" stroke="#c8c8c8" stroke-width="1.1"/></svg>
<svg class="a" style="left:51px;top:201px" width="13" height="8"><path d="M1.5 1.5 L6.5 6 L11.5 1.5" fill="none" stroke="#c8c8c8" stroke-width="1.1"/></svg>
<div class="a" style="left:70px;top:52px;width:7px;height:24px;border:1px solid #777;background:#2a3a2a"></div>
<div class="a code" style="top:52px;left:70.5px"><span style="color:#ffd700">{</span></div>
<div class="a" style="left:70px;top:340px;width:7px;height:24px;border:1px solid #777;background:#2a3a2a"></div>
<div class="a code" style="top:340px;left:70.5px"><span style="color:#ffd700">}</span></div>
<div class="a" style="left:70px;top:76px;width:1px;height:264px;background:#505050"></div>
<div class="a" style="left:83px;top:76px;width:1px;height:264px;background:#404040"></div>
<div class="a" style="left:96px;top:100px;width:1px;height:72px;background:#404040"></div>
<div class="a" style="left:110px;top:100px;width:1px;height:72px;background:#404040"></div>
<div class="a" style="left:96px;top:220px;width:1px;height:96px;background:#404040"></div>
<div class="a" style="left:110px;top:220px;width:1px;height:96px;background:#404040"></div>
<div class="a" style="left:640px;top:52px;width:14px;height:658px;background:#4d4d4d;border-left:1px solid #555"></div>
<div class="a" style="left:640px;top:710px;width:1px;height:217px;background:#3c3c3c"></div>
<div class="a" style="left:645px;top:52px;width:5px;height:18px;background:#8a8a8a"></div>
<div class="a" style="left:645px;top:268px;width:5px;height:18px;background:#999"></div>
<div class="a" style="left:654px;top:30px;width:1px;height:897px;background:#3a3a3a"></div>
</div><!-- /EDITOR -->
<!-- STATUS -->
<div id="status" class="a">
<div class="a" style="left:8px;top:7px;font-size:12px;line-height:14px;color:#a8a8a8">页面路径</div>
<svg class="a" style="left:60px;top:12px" width="8" height="5"><path d="M0.5 0.5 L7 0.5 L3.75 4Z" fill="#999"/></svg>
<div class="a" style="left:75px;top:7px;width:1px;height:15px;background:#555"></div>
<div class="a" style="left:83px;top:7px;font-size:12px;line-height:14px;color:#a8a8a8">pages/index/index</div>
<svg class="a" style="left:186px;top:7px" width="16" height="16"><path d="M2.5 11.5 V2.5 H11.5" fill="none" stroke="#aaa" stroke-width="1"/><rect x="4.5" y="4.5" width="9" height="9" fill="none" stroke="#aaa" stroke-width="1.1"/></svg>
<svg class="a" style="left:405px;top:5px" width="90" height="20">
<circle cx="14" cy="11.5" r="4.8" fill="none" stroke="#999" stroke-width="1"/>
<path d="M11.3 7.2 Q11.5 4.5 14 4.3 Q16.5 4.5 16.7 7.2 M14 6.8 V16.3 M9.4 9.3 L7 7.3 M9.2 12 H6.8 M9.6 14.3 L7 16.5 M18.6 9.3 L21 7.3 M18.8 12 H21.2 M18.4 14.3 L21 16.5" fill="none" stroke="#999" stroke-width="1"/>
<path d="M39 10 Q47 3 55 10 Q47 17 39 10Z" fill="none" stroke="#999" stroke-width="1"/>
<circle cx="47" cy="10" r="2.6" fill="none" stroke="#999" stroke-width="1"/>
<rect x="73" y="9" width="2" height="2" fill="#999"/><rect x="78" y="9" width="2" height="2" fill="#999"/><rect x="83" y="9" width="2" height="2" fill="#999"/>
</svg>
<div class="a" style="left:500px;top:0;width:1px;height:28px;background:#2a2a2a"></div>
<svg class="a" style="left:514px;top:7px" width="60" height="14">
<circle cx="8.5" cy="7" r="5.3" fill="none" stroke="#a0a0a0" stroke-width="1"/>
<path d="M6.3 4.8 L10.7 9.2 M10.7 4.8 L6.3 9.2" stroke="#a0a0a0" stroke-width="1"/>
<path d="M36 1.8 L41.5 12 H30.5Z" fill="none" stroke="#a0a0a0" stroke-width="1"/>
<path d="M36 5.5 V9 M36 10 V11" stroke="#a0a0a0" stroke-width="1"/>
</svg>
<div class="a st" style="left:533px">0</div>
<div class="a st" style="left:560px">0</div>
<div class="a st" style="left:1118px">行 1，列 1</div>
<div class="a st" style="left:1190px">空格: 2</div>
<div class="a st" style="left:1243px;font-size:11.3px">UTF-8</div>
<div class="a st" style="left:1291px;font-size:11.3px">LF</div>
<div class="a st" style="left:1318px;font-size:11.3px">JSON</div>
</div>

</body></html>
